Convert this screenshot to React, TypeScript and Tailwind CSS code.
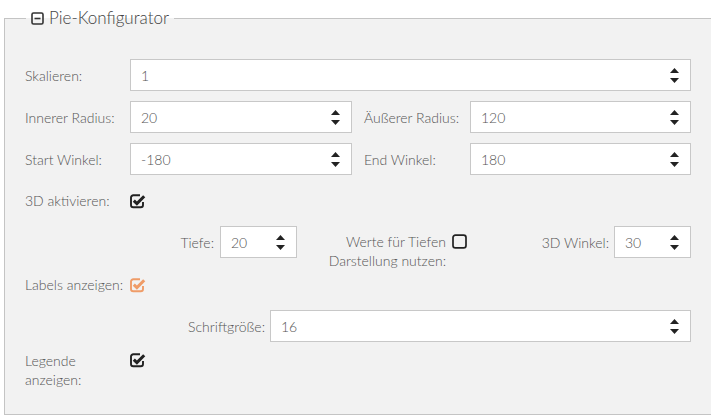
import React from 'react';

const Spinner: React.FC = () => (
    <svg width="9" height="15" viewBox="0 0 9 15" className="shrink-0">
        <path d="M0 5 L4.5 0 L9 5 Z" fill="#222" />
        <path d="M0 10 L9 10 L4.5 15 Z" fill="#222" />
    </svg>
);

const NumberField: React.FC<{ value: string; className?: string }> = ({ value, className = '' }) => (
    <div className={`h-[32px] bg-white border border-[#c8c8c8] flex items-center justify-between pl-[10px] pr-[11px] ${className}`}>
        <span className="text-[14px] text-[#555] font-light">{value}</span>
        <Spinner />
    </div>
);

const CheckBox: React.FC<{ checked?: boolean; color?: string }> = ({ checked = false, color = '#222' }) => (
    <svg width="16" height="16" viewBox="0 0 16 16" className="shrink-0">
        {checked ? (
            <>
                <path
                    d="M13 9 V12 A2.3 2.3 0 0 1 10.7 14.3 H3.3 A2.3 2.3 0 0 1 1 12 V4.6 A2.3 2.3 0 0 1 3.3 2.3 H10"
                    fill="none"
                    stroke={color}
                    strokeWidth="1.9"
                />
                <path d="M3.8 7.6 L6.9 10.6 L14.2 3.2" fill="none" stroke={color} strokeWidth="3" strokeLinejoin="miter" />
            </>
        ) : (
            <rect x="1" y="2.2" width="13" height="12.6" rx="2.4" fill="none" stroke={color} strokeWidth="1.7" />
        )}
    </svg>
);

const Label: React.FC<{ children: React.ReactNode; className?: string }> = ({ children, className = '' }) => (
    <div className={`text-[14px] text-[#555] font-light leading-[19px] ${className}`}>{children}</div>
);

export default function App() {
    return (
        <div className="w-[716px] h-[420px] bg-white pt-[6px] pl-[4px] pr-[5px] font-['Lato',_'Open_Sans',_sans-serif]">
            <fieldset className="h-[409px] bg-[#f2f2f2] border border-r-0 border-[#c4c4c4] pl-[20px] pr-[20px]">
                <legend className="ml-[1px] px-[5px] flex items-center gap-[5px] leading-[24px]">
                    <svg width="13" height="13" viewBox="0 0 13 13" className="shrink-0">
                        <rect x="1" y="1" width="11" height="11" rx="1.5" fill="none" stroke="#333" strokeWidth="1.6" />
                        <path d="M3.5 6.5 H9.5" stroke="#333" strokeWidth="1.6" />
                    </svg>
                    <span className="text-[17px] text-[#444] font-light">Pie-Konfigurator</span>
                </legend>

                <div className="flex flex-col pt-[29px]">
                    {/* Skalieren */}
                    <div className="flex items-center">
                        <Label className="w-[105px] shrink-0">Skalieren:</Label>
                        <NumberField value="1" className="flex-1" />
                    </div>

                    {/* Radius */}
                    <div className="flex items-center gap-[12px] mt-[10px]">
                        <div className="flex items-center flex-1">
                            <Label className="w-[105px] shrink-0">Innerer Radius:</Label>
                            <NumberField value="20" className="flex-1" />
                        </div>
                        <div className="flex items-center flex-1">
                            <Label className="w-[106px] shrink-0">Äußerer Radius:</Label>
                            <NumberField value="120" className="flex-1" />
                        </div>
                    </div>

                    {/* Winkel */}
                    <div className="flex items-center gap-[12px] mt-[10px]">
                        <div className="flex items-center flex-1">
                            <Label className="w-[105px] shrink-0">Start Winkel:</Label>
                            <NumberField value="-180" className="flex-1" />
                        </div>
                        <div className="flex items-center flex-1">
                            <Label className="w-[106px] shrink-0">End Winkel:</Label>
                            <NumberField value="180" className="flex-1" />
                        </div>
                    </div>

                    {/* 3D aktivieren */}
                    <div className="flex items-center mt-[16px] h-[19px]">
                        <Label className="w-[105px] shrink-0">3D aktivieren:</Label>
                        <CheckBox checked />
                    </div>

                    {/* 3D options */}
                    <div className="flex items-start mt-[16px] pl-[105px]">
                        <div className="flex items-center w-[167px]">
                            <Label className="flex-1 text-right pr-[6px]">Tiefe:</Label>
                            <NumberField value="20" className="w-[77px]" />
                        </div>
                        <div className="flex items-start w-[171px] pt-[6px]">
                            <Label className="flex-1 text-right pr-[6px]">
                                Werte für Tiefen
                                <br />
                                Darstellung nutzen:
                            </Label>
                            <div className="pt-[1px]">
                                <CheckBox />
                            </div>
                        </div>
                        <div className="flex items-center flex-1">
                            <Label className="flex-1 text-right pr-[5px]">3D Winkel:</Label>
                            <NumberField value="30" className="w-[77px]" />
                        </div>
                    </div>

                    {/* Labels anzeigen */}
                    <div className="flex items-center mt-[5px] h-[19px]">
                        <Label className="w-[105px] shrink-0">Labels anzeigen:</Label>
                        <CheckBox checked color="#ef9c68" />
                    </div>

                    {/* Schriftgröße */}
                    <div className="flex items-center mt-[16px] pl-[105px]">
                        <Label className="w-[140px] text-right pr-[5px]">Schriftgröße:</Label>
                        <NumberField value="16" className="flex-1" />
                    </div>

                    {/* Legende anzeigen */}
                    <div className="flex items-start mt-[9px]">
                        <Label className="w-[105px] shrink-0 pr-[20px]">Legende anzeigen:</Label>
                        <div className="pt-[1px]">
                            <CheckBox checked />
                        </div>
                    </div>
                </div>
            </fieldset>
        </div>
    );
}
